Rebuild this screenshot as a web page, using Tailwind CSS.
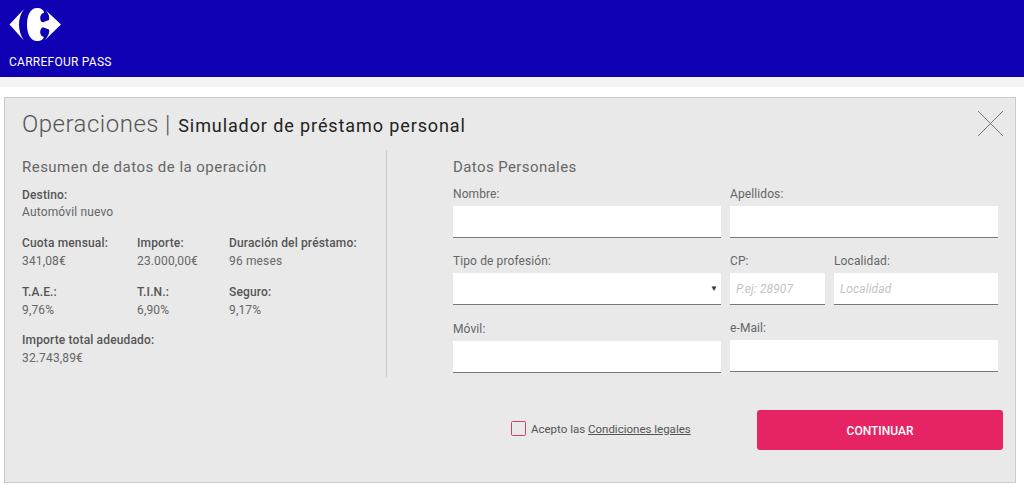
<!DOCTYPE html>
<html lang="es">
<head>
  <meta charset="UTF-8">
  <title>Carrefour Pass</title>
  <script src="https://cdn.jsdelivr.net/npm/@tailwindcss/browser@4"></script>
</head>
<body class="bg-white font-['Roboto',sans-serif] h-[491px] overflow-hidden">
  <header class="h-[77px] bg-[#1000b4] pl-[9px] pt-[8px]">
    <svg class="block w-[54px] h-[35px]" viewBox="10 8 54 35" fill="#fff">
      <path d="M25 9 10.500 24.500 25 40.500C21.500 35.500 20 30 20 24.500 20 19 21.500 14 25 9Z"/>
      <path d="M38 8C31.500 8 28 15 28 24.500 28 34 31.500 41 38 41 42 41 45 39 45 36L45 13C45 10 42 8 38 8Z"/>
      <ellipse cx="45" cy="18" rx="3.800" ry="5" fill="#1000b4"/>
      <ellipse cx="45" cy="32" rx="3.800" ry="5" fill="#1000b4"/>
      <path d="M46 9.500 62 24.500 46 40C49 36 51 33 50 29.500L42 26.500 42 23 50 20C51 16 49 13 46 9.500Z"/>
    </svg>
    <p class="mt-[11px] text-[12px] leading-[16px] tracking-[0.25px] text-white">CARREFOUR PASS</p>
  </header>
  <div class="h-[10px] bg-[#f4f4f4]"></div>

  <main class="ml-[4px] mt-[10px] w-[1012px] h-[386px] border border-[#c9c9c9] bg-[#e9e9e9] relative">
    <div class="pl-[17px] pt-[11px] h-[52px] flex items-baseline">
      <span class="text-[24px] leading-[30px] font-light tracking-[0.5px] text-[#555]">Operaciones</span>
      <span class="text-[24px] leading-[30px] font-light ml-[6px] mr-[8px] text-[#555]">|</span>
      <span class="text-[18px] leading-[30px] tracking-[0.9px] text-[#222]">Simulador de préstamo personal</span>
    </div>
    <svg class="absolute right-[11px] top-[12px] w-[27px] h-[27px]" viewBox="0 0 27 27" fill="none" stroke="#777" stroke-width="1"><path d="M1 1 26 26M26 1 1 26"/></svg>

    <div class="flex">
      <section class="w-[382px] h-[227px] pl-[17px] border-r border-[#c9c9c9] text-[12px] leading-[18px] tracking-[0.15px] text-[#666]">
        <h2 class="text-[15px] leading-[18px] mt-[8px] mb-[10px] tracking-[0.47px] text-[#666]">Resumen de datos de la operación</h2>
        <p class="font-medium text-[#555]">Destino:</p>
        <p class="-mt-px">Automóvil nuevo</p>
        <div class="grid grid-cols-[115px_92px_1fr] mt-[13px] gap-y-[12.5px]">
          <div><p class="font-medium text-[#555]">Cuota mensual:</p><p>341,08€</p></div>
          <div><p class="font-medium text-[#555]">Importe:</p><p>23.000,00€</p></div>
          <div><p class="font-medium text-[#555]">Duración del préstamo:</p><p>96 meses</p></div>
          <div><p class="font-medium text-[#555]">T.A.E.:</p><p>9,76%</p></div>
          <div><p class="font-medium text-[#555]">T.I.N.:</p><p>6,90%</p></div>
          <div><p class="font-medium text-[#555]">Seguro:</p><p>9,17%</p></div>
          <div class="col-span-3"><p class="font-medium text-[#555]">Importe total adeudado:</p><p>32.743,89€</p></div>
        </div>
      </section>

      <section class="pl-[66px] w-[611px] text-[12px] leading-[16px] tracking-[0.1px] text-[#666]">
        <h2 class="text-[15px] leading-[18px] mt-[8px] mb-[10px] tracking-[0.4px]">Datos Personales</h2>
        <div class="grid grid-cols-[268px_268px] gap-x-[9px] gap-y-[15px]">
          <label class="block"><span class="block mb-[4px]">Nombre:</span><input class="block w-full h-[32px] bg-white border-b border-[#777]"></label>
          <label class="block"><span class="block mb-[4px]">Apellidos:</span><input class="block w-full h-[32px] bg-white border-b border-[#777]"></label>
          <label class="block"><span class="block mb-[4px]">Tipo de profesión:</span>
            <span class="flex justify-end items-center pr-[3px] w-full h-[32px] bg-white border-b border-[#777] text-[8px] text-[#333]">▼</span></label>
          <div class="flex gap-[9px]">
            <label class="block w-[95px]"><span class="block mb-[4px]">CP:</span><input placeholder="P.ej: 28907" class="block w-full h-[32px] px-[6px] bg-white border-b border-[#777] italic text-[12px] placeholder:text-[#c4c4c4]"></label>
            <label class="block w-[164px]"><span class="block mb-[4px]">Localidad:</span><input placeholder="Localidad" class="block w-full h-[32px] px-[6px] bg-white border-b border-[#777] italic text-[12px] placeholder:text-[#c4c4c4]"></label>
          </div>
          <label class="block mt-px"><span class="block mb-[4px]">Móvil:</span><input class="block w-full h-[32px] bg-white border-b border-[#777]"></label>
          <label class="block"><span class="block mb-[4px]">e-Mail:</span><input class="block w-full h-[32px] bg-white border-b border-[#777]"></label>
        </div>
      </section>
    </div>

    <div class="absolute left-[506px] top-[312px] w-[492px] h-[40px] flex items-center">
      <svg class="w-[15px] h-[15px] -mt-[3px]" viewBox="0 0 15 15" fill="none" stroke="#cf3d68" stroke-width="1"><rect x=".5" y=".5" width="14" height="14" rx="1"/></svg>
      <span class="ml-[5px] -mt-[1px] w-[220px] text-[11.5px] text-[#555]">Acepto las <a class="underline">Condiciones legales</a></span>
      <button class="ml-auto w-[246px] h-[40px] pt-[2px] rounded-[3px] bg-[#e62463] text-white text-[12px] font-medium">CONTINUAR</button>
    </div>
  </main>
</body>
</html>
